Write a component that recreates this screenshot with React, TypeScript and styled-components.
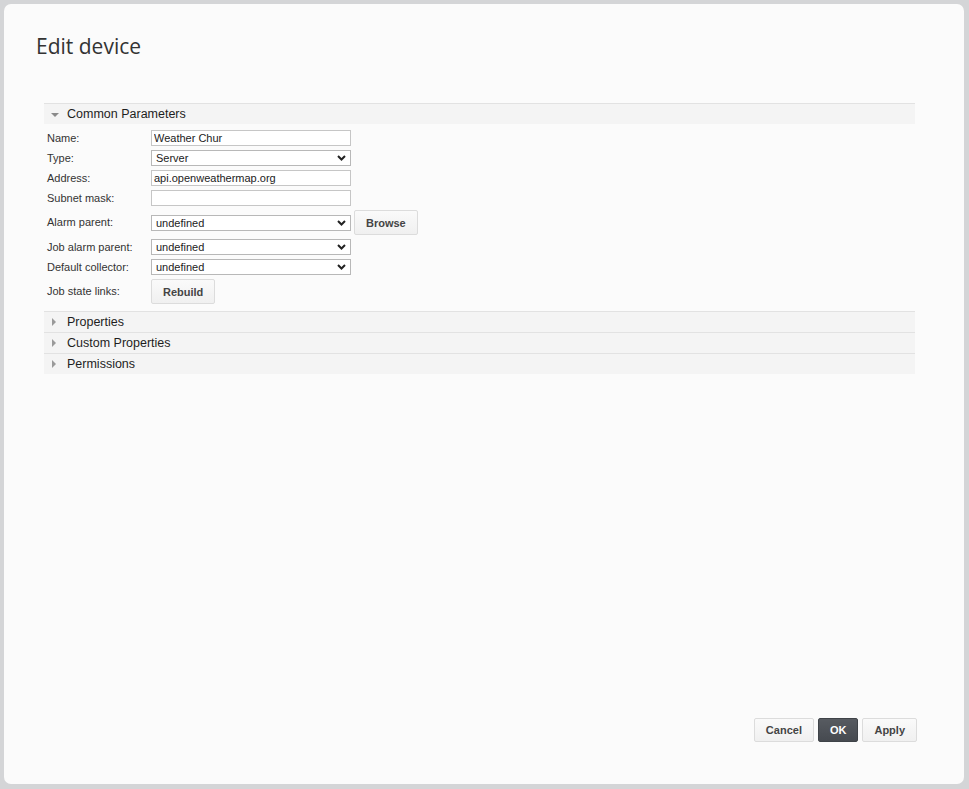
import * as React from 'react';
import styled, { createGlobalStyle } from 'styled-components';

const GlobalStyle = createGlobalStyle`
    html, body {
        margin: 0;
        padding: 0;
        background: #d4d5d7;
        font-family: "Liberation Sans", Arial, sans-serif;
    }
`;

const Page = styled.div`
    width: 969px;
    height: 789px;
    padding: 4px;
    box-sizing: border-box;
`;

const Dialog = styled.div`
    width: 960px;
    height: 780px;
    box-sizing: border-box;
    background: #fbfbfb;
    border-radius: 7px;
    display: flex;
    flex-direction: column;
    padding: 0 47px 42px 40px;
`;

const Title = styled.h1`
    margin: 0 0 0 -8px;
    padding: 29px 0 0 0;
    box-sizing: border-box;
    height: 99px;
    font-family: "Open Sans", "Liberation Sans", sans-serif;
    font-weight: 400;
    font-size: 21px;
    line-height: 26px;
    color: #333;
`;

const Section = styled.div`
    width: 871px;
    display: flex;
    flex-direction: column;
`;

const Header = styled.div`
    height: 20px;
    border-top: 1px solid #e2e2e2;
    background: #f4f4f4;
    display: flex;
    align-items: center;
    font-size: 12.5px;
    color: #1e1e1e;
`;

const Arrow = styled.span<{ open?: boolean }>`
    width: 0;
    height: 0;
    margin: 0 8px 0 ${p => (p.open ? 7 : 8)}px;
    ${p => p.open
        ? `border-left: 4px solid transparent; border-right: 4px solid transparent; border-top: 4px solid #8a8a8a; margin-top: 1px;`
        : `border-top: 4px solid transparent; border-bottom: 4px solid transparent; border-left: 4px solid #9a9a9a; margin-right: 11px;`}
`;

const Form = styled.div`
    display: grid;
    grid-template-columns: 104px auto;
    justify-content: start;
    align-items: center;
    row-gap: 4px;
    padding: 6px 0 7px 3px;
`;

const Label = styled.label`
    font-size: 11px;
    line-height: 13px;
    color: #333;
`;

const Field = styled.div`
    display: flex;
    align-items: center;
    gap: 3px;
`;

const TextInput = styled.input`
    display: block;
    width: 200px;
    height: 16px;
    box-sizing: border-box;
    border: 1px solid #c6c6c6;
    background: #fff;
    padding: 0 2px;
    font-family: "Liberation Sans", Arial, sans-serif;
    font-size: 11px;
    color: #222;
    outline: none;
`;

const SelectWrap = styled.div`
    position: relative;
    width: 200px;
    height: 16px;
`;

const Select = styled.select`
    display: block;
    appearance: none;
    width: 200px;
    height: 16px;
    box-sizing: border-box;
    border: 1px solid #b8b8b8;
    border-radius: 0;
    background: #fff;
    padding: 0 0 0 4px;
    font-family: "Liberation Sans", Arial, sans-serif;
    font-size: 11px;
    color: #222;
    outline: none;
`;

const Chevron = styled.svg`
    position: absolute;
    right: 5px;
    top: 5px;
    pointer-events: none;
`;

const Button = styled.button<{ primary?: boolean }>`
    height: 24px;
    box-sizing: border-box;
    padding: 0 11px;
    border-radius: 2px;
    border: 1px solid ${p => (p.primary ? '#3f4348' : '#dcdcdc')};
    background: ${p => (p.primary ? 'linear-gradient(#575b61, #464a50)' : 'linear-gradient(#fafafa, #f0f0f0)')};
    color: ${p => (p.primary ? '#fff' : '#444')};
    font-family: "Liberation Sans", Arial, sans-serif;
    font-size: 11px;
    font-weight: bold;
`;

const FormButton = styled(Button)`
    height: 25px;
`;

const Spacer = styled.div`
    flex: 1;
`;

const Footer = styled.div`
    display: flex;
    justify-content: flex-end;
    gap: 4px;
`;

const DropDown: React.FC<{ value: string }> = ({ value }) => (
    <SelectWrap>
        <Select defaultValue={value}>
            <option>{value}</option>
        </Select>
        <Chevron width="9" height="6" viewBox="0 0 9 6">
            <path d="M1 1 L4.5 4.5 L8 1" fill="none" stroke="#222" strokeWidth="2" />
        </Chevron>
    </SelectWrap>
);

const Collapsed: React.FC<{ title: string }> = ({ title }) => (
    <Header>
        <Arrow />
        {title}
    </Header>
);

export default function App() {
    return (
        <Page>
            <GlobalStyle />
            <Dialog>
                <Title>Edit device</Title>
                <Section>
                    <Header>
                        <Arrow open />
                        Common Parameters
                    </Header>
                    <Form>
                        <Label>Name:</Label>
                        <Field><TextInput defaultValue="Weather Chur" /></Field>
                        <Label>Type:</Label>
                        <Field><DropDown value="Server" /></Field>
                        <Label>Address:</Label>
                        <Field><TextInput defaultValue="api.openweathermap.org" /></Field>
                        <Label>Subnet mask:</Label>
                        <Field><TextInput defaultValue="" /></Field>
                        <Label>Alarm parent:</Label>
                        <Field>
                            <DropDown value="undefined" />
                            <FormButton>Browse</FormButton>
                        </Field>
                        <Label>Job alarm parent:</Label>
                        <Field><DropDown value="undefined" /></Field>
                        <Label>Default collector:</Label>
                        <Field><DropDown value="undefined" /></Field>
                        <Label>Job state links:</Label>
                        <Field><FormButton>Rebuild</FormButton></Field>
                    </Form>
                    <Collapsed title="Properties" />
                    <Collapsed title="Custom Properties" />
                    <Collapsed title="Permissions" />
                </Section>
                <Spacer />
                <Footer>
                    <Button>Cancel</Button>
                    <Button primary>OK</Button>
                    <Button>Apply</Button>
                </Footer>
            </Dialog>
        </Page>
    );
}
